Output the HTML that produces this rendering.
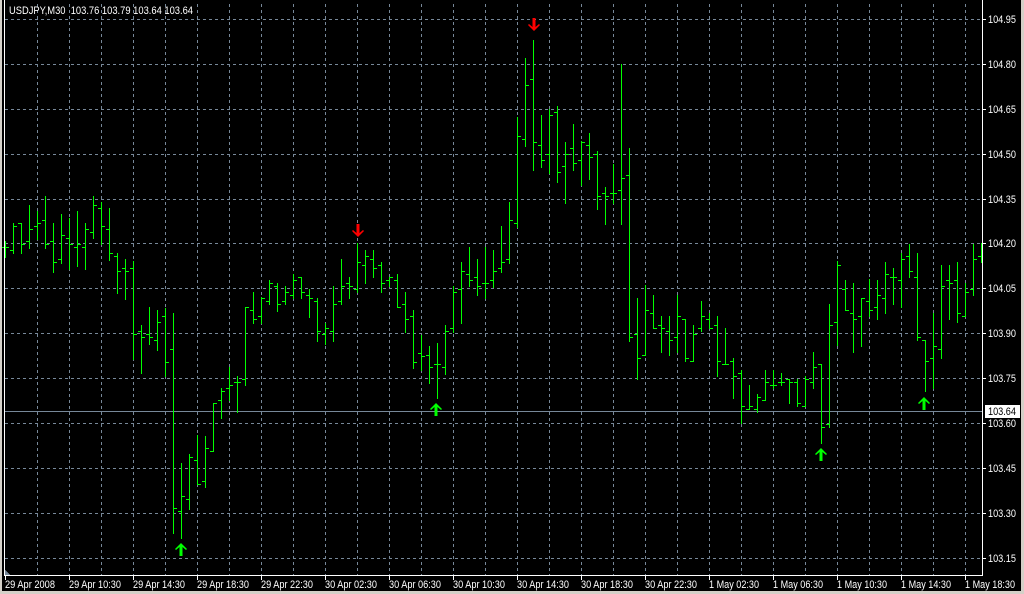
<!DOCTYPE html>
<html><head><meta charset="utf-8"><style>
html,body{margin:0;padding:0;background:#000;width:1024px;height:594px;overflow:hidden}
svg{display:block}
text{font-family:"Liberation Sans",sans-serif;font-size:11px;fill:#fff}
</style></head><body>
<svg width="1024" height="594" viewBox="0 0 1024 594" xmlns="http://www.w3.org/2000/svg" shape-rendering="crispEdges">
<rect x="0" y="0" width="1024" height="594" fill="#000"/>
<rect x="0" y="0" width="2" height="594" fill="#d4d0c8"/>
<rect x="1021" y="0" width="3" height="594" fill="#d4d0c8"/>
<rect x="0" y="591" width="1024" height="3" fill="#d4d0c8"/>
<g stroke="#778899" stroke-width="1" stroke-dasharray="3,3" fill="none">
<path d="M5 19.5H982M5 64.5H982M5 109.5H982M5 154.5H982M5 199.5H982M5 243.5H982M5 288.5H982M5 333.5H982M5 378.5H982M5 423.5H982M5 468.5H982M5 513.5H982M5 558.5H982"/>
<path d="M37.5 4V575M69.5 4V575M101.5 4V575M133.5 4V575M165.5 4V575M197.5 4V575M229.5 4V575M261.5 4V575M293.5 4V575M325.5 4V575M357.5 4V575M389.5 4V575M421.5 4V575M453.5 4V575M485.5 4V575M517.5 4V575M549.5 4V575M581.5 4V575M613.5 4V575M645.5 4V575M677.5 4V575M709.5 4V575M741.5 4V575M773.5 4V575M805.5 4V575M837.5 4V575M869.5 4V575M901.5 4V575M933.5 4V575M965.5 4V575"/>
</g>
<path d="M5 411.5H982" stroke="#778899" fill="none"/>
<g stroke="#00ff00" stroke-width="1" fill="none">
<path d="M5.5 241V258M2 247.5h3M6 247.5h3
M13.5 223V254M10 250.5h3M14 226.5h3
M21.5 223V254M18 223.5h3M22 244.5h3
M29.5 205V249M26 241.5h3M30 229.5h3
M37.5 211V240M34 226.5h3M38 223.5h3
M45.5 196V249M42 220.5h3M46 244.5h3
M53.5 223V273M50 241.5h3M54 262.5h3
M61.5 214V264M58 259.5h3M62 235.5h3
M69.5 218V270M66 238.5h3M70 244.5h3
M77.5 211V267M74 247.5h3M78 244.5h3
M85.5 223V270M82 247.5h3M86 229.5h3
M93.5 196V239M90 232.5h3M94 205.5h3
M101.5 202V245M98 208.5h3M102 226.5h3
M109.5 208V261M106 229.5h3M110 253.5h3
M117.5 253V294M114 256.5h3M118 271.5h3
M125.5 259V300M122 268.5h3M126 271.5h3
M133.5 261V360M130 268.5h3M134 334.5h3
M141.5 325V374M138 331.5h3M142 337.5h3
M149.5 307V345M146 334.5h3M150 337.5h3
M157.5 310V351M154 340.5h3M158 322.5h3
M165.5 308V377M162 316.5h3M166 362.5h3
M173.5 313V534M170 349.5h3M174 508.5h3
M181.5 463V539M178 511.5h3M182 496.5h3
M189.5 454V510M186 499.5h3M190 457.5h3
M197.5 435V485M194 460.5h3M198 484.5h3
M205.5 436V488M202 481.5h3M206 448.5h3
M213.5 403V452M210 451.5h3M214 403.5h3
M221.5 388V419M218 400.5h3M222 391.5h3
M229.5 367V401M226 388.5h3M230 385.5h3
M237.5 376V413M234 382.5h3M238 382.5h3
M245.5 307V386M242 379.5h3M246 307.5h3
M253.5 292V324M250 310.5h3M254 319.5h3
M261.5 297V324M258 316.5h3M262 298.5h3
M269.5 280V305M266 301.5h3M270 283.5h3
M277.5 283V312M274 286.5h3M278 304.5h3
M285.5 286V305M282 301.5h3M286 292.5h3
M293.5 274V299M290 295.5h3M294 280.5h3
M301.5 277V299M298 277.5h3M302 292.5h3
M309.5 289V318M306 295.5h3M310 298.5h3
M317.5 298V342M314 301.5h3M318 331.5h3
M325.5 323V345M322 334.5h3M326 328.5h3
M333.5 286V342M330 331.5h3M334 304.5h3
M341.5 259V305M338 301.5h3M342 286.5h3
M349.5 277V299M346 283.5h3M350 286.5h3
M357.5 243V293M354 289.5h3M358 262.5h3
M365.5 250V284M362 265.5h3M366 256.5h3
M373.5 250V278M370 259.5h3M374 268.5h3
M381.5 262V293M378 265.5h3M382 283.5h3
M389.5 277V287M386 280.5h3M390 277.5h3
M397.5 274V308M394 280.5h3M398 307.5h3
M405.5 292V333M402 304.5h3M406 319.5h3
M413.5 310V369M410 316.5h3M414 362.5h3
M421.5 335V371M418 353.5h3M422 356.5h3
M429.5 346V384M426 355.5h3M430 367.5h3
M437.5 343V399M434 364.5h3M438 364.5h3
M445.5 325V375M442 367.5h3M446 331.5h3
M453.5 286V333M450 328.5h3M454 292.5h3
M461.5 262V324M458 289.5h3M462 271.5h3
M469.5 247V287M466 274.5h3M470 280.5h3
M477.5 259V296M474 277.5h3M478 286.5h3
M485.5 247V299M482 283.5h3M486 283.5h3
M493.5 250V288M490 280.5h3M494 271.5h3
M501.5 226V273M498 268.5h3M502 262.5h3
M509.5 202V264M506 259.5h3M510 220.5h3
M517.5 117V228M514 223.5h3M518 136.5h3
M525.5 58V147M522 139.5h3M526 85.5h3
M533.5 40V171M530 79.5h3M534 142.5h3
M541.5 115V168M538 145.5h3M542 160.5h3
M549.5 109V174M546 154.5h3M550 115.5h3
M557.5 106V183M554 112.5h3M558 172.5h3
M565.5 142V204M562 166.5h3M566 154.5h3
M573.5 124V171M570 148.5h3M574 163.5h3
M581.5 141V186M578 160.5h3M582 142.5h3
M589.5 133V180M586 145.5h3M590 157.5h3
M597.5 151V210M594 154.5h3M598 196.5h3
M605.5 187V225M602 193.5h3M606 196.5h3
M613.5 164V204M610 193.5h3M614 193.5h3
M621.5 64V225M618 190.5h3M622 178.5h3
M629.5 148V342M626 175.5h3M630 337.5h3
M637.5 298V380M634 334.5h3M638 358.5h3
M645.5 285V356M642 355.5h3M646 310.5h3
M653.5 295V329M650 313.5h3M654 328.5h3
M661.5 316V353M658 325.5h3M662 328.5h3
M669.5 316V356M666 331.5h3M670 340.5h3
M677.5 295V353M674 337.5h3M678 316.5h3
M685.5 319V362M682 319.5h3M686 358.5h3
M693.5 325V362M690 361.5h3M694 334.5h3
M701.5 301V332M698 328.5h3M702 316.5h3
M709.5 313V329M706 319.5h3M710 328.5h3
M717.5 316V377M714 325.5h3M718 361.5h3
M725.5 328V365M722 364.5h3M726 364.5h3
M733.5 358V399M730 361.5h3M734 376.5h3
M741.5 370V424M738 373.5h3M742 406.5h3
M749.5 385V410M746 409.5h3M750 406.5h3
M757.5 394V413M754 409.5h3M758 397.5h3
M765.5 370V401M762 400.5h3M766 382.5h3
M773.5 370V389M770 385.5h3M774 385.5h3
M781.5 373V386M778 382.5h3M782 382.5h3
M789.5 379V404M786 379.5h3M790 382.5h3
M797.5 379V407M794 382.5h3M798 403.5h3
M805.5 376V407M802 406.5h3M806 379.5h3
M813.5 352V389M810 382.5h3M814 367.5h3
M821.5 364V444M818 364.5h3M822 427.5h3
M829.5 304V428M826 424.5h3M830 325.5h3
M837.5 261V346M834 322.5h3M838 265.5h3
M845.5 280V311M842 289.5h3M846 310.5h3
M853.5 283V353M850 313.5h3M854 319.5h3
M861.5 298V347M858 316.5h3M862 298.5h3
M869.5 279V317M866 301.5h3M870 310.5h3
M877.5 280V320M874 307.5h3M878 295.5h3
M885.5 262V314M882 298.5h3M886 274.5h3
M893.5 268V305M890 277.5h3M894 277.5h3
M901.5 253V308M898 280.5h3M902 259.5h3
M909.5 244V278M906 256.5h3M910 271.5h3
M917.5 253V341M914 277.5h3M918 337.5h3
M925.5 340V392M922 340.5h3M926 361.5h3
M933.5 313V389M930 358.5h3M934 346.5h3
M941.5 265V359M938 349.5h3M942 286.5h3
M949.5 265V320M946 280.5h3M950 283.5h3
M957.5 262V323M954 280.5h3M958 313.5h3
M965.5 283V317M962 316.5h3M966 292.5h3
M973.5 244V296M970 289.5h3M974 259.5h3
M981.5 243V263M978 256.5h3"/>
</g>
<g fill="#00ff00" shape-rendering="auto">
<polygon points="181,543 187,549 186,550 182.5,547 182.5,556 179.5,556 179.5,547 176,550 175,549"/>
<polygon points="436,403 442,409 441,410 437.5,407 437.5,416 434.5,416 434.5,407 431,410 430,409"/>
<polygon points="821,448 827,454 826,455 822.5,452 822.5,461 819.5,461 819.5,452 816,455 815,454"/>
<polygon points="924,397 930,403 929,404 925.5,401 925.5,410 922.5,410 922.5,401 919,404 918,403"/>
</g>
<g fill="#ff0000" shape-rendering="auto">
<polygon points="358,237 364,231 363,230 359.5,233 359.5,224 356.5,224 356.5,233 353,230 352,231"/>
<polygon points="534,31 540,25 539,24 535.5,27 535.5,18 532.5,18 532.5,27 529,24 528,25"/>
</g>
<path d="M5 570L10 575H5Z" fill="#778899"/>
<path d="M4.5 0V575.5H982.5V0" stroke="#fff" fill="none"/>
<g stroke="#fff">
<path d="M983 19.5h3M983 64.5h3M983 109.5h3M983 154.5h3M983 199.5h3M983 243.5h3M983 288.5h3M983 333.5h3M983 378.5h3M983 423.5h3M983 468.5h3M983 513.5h3M983 558.5h3"/>
<path d="M5.5 576v4M69.5 576v4M133.5 576v4M197.5 576v4M261.5 576v4M325.5 576v4M389.5 576v4M453.5 576v4M517.5 576v4M581.5 576v4M645.5 576v4M709.5 576v4M773.5 576v4M837.5 576v4M901.5 576v4M965.5 576v4"/>
</g>
<text x="9" y="14" xml:space="preserve" textLength="184" lengthAdjust="spacingAndGlyphs">USDJPY,M30  103.76 103.79 103.64 103.64</text>
<g>
<text x="988" y="23" textLength="28" lengthAdjust="spacingAndGlyphs">104.95</text>
<text x="988" y="68" textLength="28" lengthAdjust="spacingAndGlyphs">104.80</text>
<text x="988" y="113" textLength="28" lengthAdjust="spacingAndGlyphs">104.65</text>
<text x="988" y="158" textLength="28" lengthAdjust="spacingAndGlyphs">104.50</text>
<text x="988" y="203" textLength="28" lengthAdjust="spacingAndGlyphs">104.35</text>
<text x="988" y="247" textLength="28" lengthAdjust="spacingAndGlyphs">104.20</text>
<text x="988" y="292" textLength="28" lengthAdjust="spacingAndGlyphs">104.05</text>
<text x="988" y="337" textLength="28" lengthAdjust="spacingAndGlyphs">103.90</text>
<text x="988" y="382" textLength="28" lengthAdjust="spacingAndGlyphs">103.75</text>
<text x="988" y="427" textLength="28" lengthAdjust="spacingAndGlyphs">103.60</text>
<text x="988" y="472" textLength="28" lengthAdjust="spacingAndGlyphs">103.45</text>
<text x="988" y="517" textLength="28" lengthAdjust="spacingAndGlyphs">103.30</text>
<text x="988" y="562" textLength="28" lengthAdjust="spacingAndGlyphs">103.15</text>
</g>
<rect x="985" y="405" width="35" height="13" fill="#fff"/>
<text x="988" y="415" style="fill:#000" textLength="28" lengthAdjust="spacingAndGlyphs">103.64</text>
<g>
<text x="5" y="588" textLength="50" lengthAdjust="spacingAndGlyphs">29 Apr 2008</text>
<text x="69" y="588" textLength="52" lengthAdjust="spacingAndGlyphs">29 Apr 10:30</text>
<text x="133" y="588" textLength="52" lengthAdjust="spacingAndGlyphs">29 Apr 14:30</text>
<text x="197" y="588" textLength="52" lengthAdjust="spacingAndGlyphs">29 Apr 18:30</text>
<text x="261" y="588" textLength="52" lengthAdjust="spacingAndGlyphs">29 Apr 22:30</text>
<text x="325" y="588" textLength="52" lengthAdjust="spacingAndGlyphs">30 Apr 02:30</text>
<text x="389" y="588" textLength="52" lengthAdjust="spacingAndGlyphs">30 Apr 06:30</text>
<text x="453" y="588" textLength="52" lengthAdjust="spacingAndGlyphs">30 Apr 10:30</text>
<text x="517" y="588" textLength="52" lengthAdjust="spacingAndGlyphs">30 Apr 14:30</text>
<text x="581" y="588" textLength="52" lengthAdjust="spacingAndGlyphs">30 Apr 18:30</text>
<text x="645" y="588" textLength="52" lengthAdjust="spacingAndGlyphs">30 Apr 22:30</text>
<text x="709" y="588" textLength="50" lengthAdjust="spacingAndGlyphs">1 May 02:30</text>
<text x="773" y="588" textLength="50" lengthAdjust="spacingAndGlyphs">1 May 06:30</text>
<text x="837" y="588" textLength="50" lengthAdjust="spacingAndGlyphs">1 May 10:30</text>
<text x="901" y="588" textLength="50" lengthAdjust="spacingAndGlyphs">1 May 14:30</text>
<text x="965" y="588" textLength="50" lengthAdjust="spacingAndGlyphs">1 May 18:30</text>
</g>
</svg>
</body></html>
